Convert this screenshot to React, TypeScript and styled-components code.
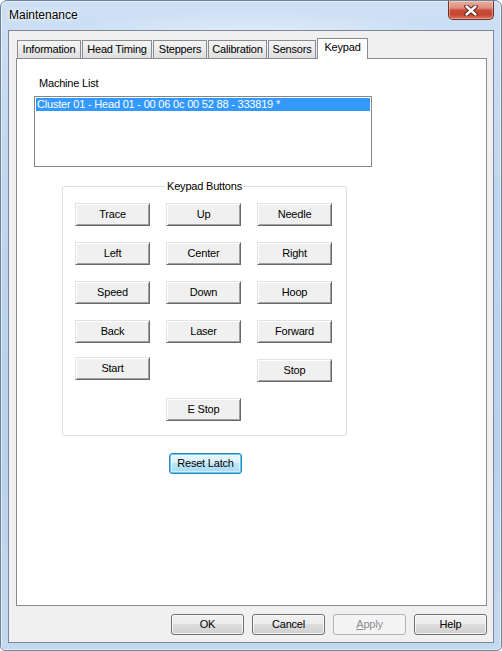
import { FC } from 'react';
import styled, { createGlobalStyle, css } from 'styled-components';

const GlobalStyle = createGlobalStyle`
  html, body {
    margin: 0;
    padding: 0;
  }
  body {
    width: 502px;
    height: 651px;
    overflow: hidden;
    background: #ffffff;
    font-family: "Liberation Sans", Arial, sans-serif;
  }
`;

const Window = styled.div`
  box-sizing: border-box;
  width: 502px;
  height: 651px;
  display: flex;
  flex-direction: column;
  border: 1px solid #6e8299;
  border-radius: 7px 7px 5px 5px;
  background:
    radial-gradient(ellipse 190px 26px at 250px 34px, rgba(255, 255, 255, 0.45), transparent),
    linear-gradient(180deg, #cde0f5 0%, #bed6ef 30%, #b9d2ec 70%, #c3d9f0 100%);
  box-shadow: inset 0 0 0 1px rgba(255, 255, 255, 0.55);
`;

const TitleBar = styled.div`
  display: flex;
  align-items: flex-start;
  height: 29px;
  flex-shrink: 0;
`;

const Title = styled.div`
  padding: 7px 0 0 8px;
  font-size: 12px;
  line-height: 15px;
  color: #000;
  text-shadow: 0 0 6px #ffffff, 0 0 3px #ffffff;
`;

const CloseButton = styled.div`
  box-sizing: border-box;
  margin-left: auto;
  margin-right: 7px;
  width: 46px;
  height: 19px;
  display: flex;
  align-items: center;
  justify-content: center;
  border: 1px solid #7b2c21;
  border-top: none;
  border-radius: 0 0 5px 5px;
  background: linear-gradient(
    180deg,
    #eab0a2 0%,
    #dd8a78 40%,
    #c9503a 50%,
    #c54632 75%,
    #d97458 100%
  );
  box-shadow: inset 0 0 0 1px rgba(255, 255, 255, 0.35);
`;

const Client = styled.div`
  box-sizing: border-box;
  flex: 1;
  margin: 0 7px 7px;
  display: flex;
  flex-direction: column;
  padding: 7px 6px 7px 7px;
  border: 1px solid #7e8793;
  background: #f0f0f0;
  font-size: 11px;
  letter-spacing: -0.2px;
  color: #000;
`;

const TabStrip = styled.div`
  display: flex;
  align-items: flex-end;
  gap: 1px;
  height: 20px;
  padding-left: 1px;
`;

const Tab = styled.div<{ $width: number; $active?: boolean }>`
  box-sizing: border-box;
  width: ${({ $width }) => $width}px;
  height: 18px;
  display: flex;
  align-items: center;
  justify-content: center;
  border: 1px solid #898c95;
  border-bottom: none;
  background: linear-gradient(180deg, #f4f4f4 0%, #ebebeb 50%, #dedede 100%);
  line-height: 13px;
  ${({ $active }) =>
    $active &&
    css`
      position: relative;
      z-index: 1;
      height: 21px;
      margin-bottom: -1px;
      padding-bottom: 3px;
      background: #ffffff;
    `}
`;

const Panel = styled.div`
  box-sizing: border-box;
  height: 548px;
  display: flex;
  flex-direction: column;
  align-items: flex-start;
  padding-top: 18px;
  border: 1px solid #898c95;
  background: #ffffff;
`;

const FieldLabel = styled.div`
  margin-left: 22px;
  line-height: 13px;
`;

const ListBox = styled.div`
  box-sizing: border-box;
  width: 338px;
  height: 71px;
  margin: 6px 0 0 17px;
  padding: 1px;
  border: 1px solid #828790;
  background: #ffffff;
`;

const ListItem = styled.div<{ $selected?: boolean }>`
  height: 13px;
  line-height: 13px;
  padding-left: 1px;
  white-space: nowrap;
  ${({ $selected }) =>
    $selected &&
    css`
      background: #3399ff;
      color: #ffffff;
    `}
`;

const GroupBox = styled.div`
  box-sizing: border-box;
  width: 285px;
  margin: 19px 0 0 45px;
  padding: 0 12px 14px;
  border: 1px solid #d5dfe5;
  border-radius: 3px;
`;

const GroupTitle = styled.div`
  display: table;
  margin: -7px auto 0;
  padding: 0 2px;
  line-height: 13px;
  background: #ffffff;
`;

const KeyGrid = styled.div`
  display: grid;
  grid-template-columns: repeat(3, 75px);
  grid-auto-rows: 23px;
  column-gap: 16px;
  row-gap: 16px;
  margin-top: 10px;
`;

const KeyButton = styled.button<{ $column?: number; $shift?: number }>`
  box-sizing: border-box;
  width: 75px;
  height: 23px;
  margin: 0;
  margin-top: ${({ $shift = 0 }) => $shift}px;
  padding: 0 0 1px;
  grid-column: ${({ $column }) => ($column ? `${$column}` : 'auto')};
  font: inherit;
  font-size: 11px;
  letter-spacing: -0.2px;
  color: #000;
  background: #f0f0f0;
  border: 1px solid;
  border-color: #e3e3e3 #696969 #696969 #e3e3e3;
  box-shadow: inset 1px 1px 0 #ffffff, inset -1px -1px 0 #a0a0a0;
`;

const ResetButton = styled.button`
  box-sizing: border-box;
  width: 73px;
  height: 21px;
  margin: 17px 0 0 152px;
  padding: 0 0 1px;
  font: inherit;
  font-size: 11px;
  letter-spacing: -0.2px;
  color: #000;
  border: 1px solid #3c7fb1;
  border-radius: 3px;
  background: linear-gradient(180deg, #eaf6fd 0%, #d9f0fc 50%, #bee6fd 50%, #a7d9f5 100%);
  box-shadow: inset 0 0 0 1px #4fd2fb, inset 0 0 0 2px rgba(255, 255, 255, 0.5);
`;

const ButtonRow = styled.div`
  display: flex;
  justify-content: flex-end;
  gap: 8px;
  margin-top: 8px;
`;

const DialogButton = styled.button<{ $disabled?: boolean }>`
  box-sizing: border-box;
  width: 73px;
  height: 21px;
  margin: 0;
  padding: 0 0 1px;
  font: inherit;
  font-size: 11px;
  letter-spacing: -0.2px;
  color: #000;
  border: 1px solid #707070;
  border-radius: 3px;
  background: linear-gradient(180deg, #f2f2f2 0%, #ebebeb 50%, #dddddd 50%, #cfcfcf 100%);
  box-shadow: inset 0 0 0 1px rgba(255, 255, 255, 0.7);
  ${({ $disabled }) =>
    $disabled &&
    css`
      color: #8d8d8d;
      border-color: #adb2b5;
      background: #f4f4f4;
      box-shadow: none;
    `}
`;

const CloseGlyph: FC = () => (
  <svg width="14" height="11" viewBox="0 0 14 11">
    <path d="M2.5 1.5 L11.5 9.5 M11.5 1.5 L2.5 9.5" stroke="#5a2118" strokeWidth="4.4" strokeLinecap="round" />
    <path d="M2.5 1.5 L11.5 9.5 M11.5 1.5 L2.5 9.5" stroke="#ffffff" strokeWidth="2.4" strokeLinecap="round" />
  </svg>
);

const tabs = [
  { label: 'Information', width: 64 },
  { label: 'Head Timing', width: 70 },
  { label: 'Steppers', width: 54 },
  { label: 'Calibration', width: 59 },
  { label: 'Sensors', width: 48 },
  { label: 'Keypad', width: 51, active: true },
];

const keys: { label: string; column?: number; shift?: number }[] = [
  { label: 'Trace' },
  { label: 'Up' },
  { label: 'Needle' },
  { label: 'Left' },
  { label: 'Center' },
  { label: 'Right' },
  { label: 'Speed' },
  { label: 'Down' },
  { label: 'Hoop' },
  { label: 'Back' },
  { label: 'Laser' },
  { label: 'Forward' },
  { label: 'Start', column: 1, shift: -2 },
  { label: 'Stop', column: 3 },
  { label: 'E Stop', column: 2 },
];

const App: FC = () => (
  <>
    <GlobalStyle />
    <Window>
      <TitleBar>
        <Title>Maintenance</Title>
        <CloseButton>
          <CloseGlyph />
        </CloseButton>
      </TitleBar>

      <Client>
        <TabStrip>
          {tabs.map((t) => (
            <Tab key={t.label} $width={t.width} $active={t.active}>
              {t.label}
            </Tab>
          ))}
        </TabStrip>

        <Panel>
          <FieldLabel>Machine List</FieldLabel>
          <ListBox>
            <ListItem $selected>Cluster 01 - Head 01 - 00 06 0c 00 52 88 - 333819 *</ListItem>
          </ListBox>

          <GroupBox>
            <GroupTitle>Keypad Buttons</GroupTitle>
            <KeyGrid>
              {keys.map((k) => (
                <KeyButton key={k.label} $column={k.column} $shift={k.shift}>
                  {k.label}
                </KeyButton>
              ))}
            </KeyGrid>
          </GroupBox>

          <ResetButton>Reset Latch</ResetButton>
        </Panel>

        <ButtonRow>
          <DialogButton>OK</DialogButton>
          <DialogButton>Cancel</DialogButton>
          <DialogButton $disabled>
            <u>A</u>pply
          </DialogButton>
          <DialogButton>Help</DialogButton>
        </ButtonRow>
      </Client>
    </Window>
  </>
);

export default App;
